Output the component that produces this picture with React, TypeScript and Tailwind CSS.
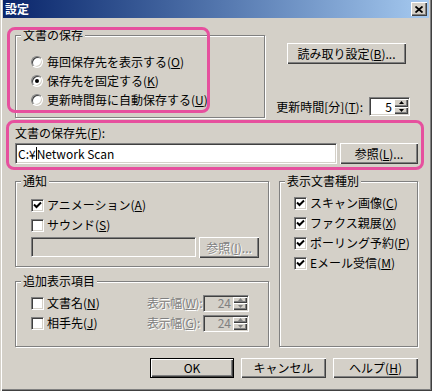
import type { ReactNode } from 'react'

const raised =
  'bg-[#d4d0c8] shadow-[inset_1px_1px_0_#fff,inset_-1px_-1px_0_#404040,inset_-2px_-2px_0_#808080]'
const sunken =
  'border border-t-[#808080] border-l-[#808080] border-r-white border-b-white shadow-[inset_1px_1px_0_#404040,inset_-1px_-1px_0_#d4d0c8]'
const grayText = 'text-[#808080] [text-shadow:1px_1px_0_#fff]'

function Mn({ text, k, tail = '' }: { text: string; k: string; tail?: string }) {
  return (
    <>
      {text}(<u className="underline-offset-1">{k}</u>){tail}
    </>
  )
}

function Btn({
  className = '',
  children,
  def,
  disabled,
}: {
  className?: string
  children: ReactNode
  def?: boolean
  disabled?: boolean
}) {
  return (
    <div
      className={`flex shrink-0 items-center justify-center whitespace-nowrap ${raised} ${
        def ? 'border border-black' : ''
      } ${disabled ? grayText : ''} ${className}`}
    >
      {children}
    </div>
  )
}

function Group({
  title,
  className = '',
  children,
}: {
  title: string
  className?: string
  children?: ReactNode
}) {
  return (
    <div
      className={`relative shrink-0 border border-[#808080] shadow-[inset_1px_1px_0_#fff,1px_1px_0_#fff] ${className}`}
    >
      <span className="absolute -top-[8px] left-[5px] bg-[#d4d0c8] px-[2px] leading-[14px]">
        {title}
      </span>
      {children}
    </div>
  )
}

function Radio({ checked, children }: { checked?: boolean; children: ReactNode }) {
  return (
    <div className="flex h-[19px] items-center gap-[4px] whitespace-nowrap">
      <span
        className={`flex h-[12px] w-[12px] items-center justify-center rounded-full bg-white ${sunken}`}
      >
        {checked && <span className="h-[4px] w-[4px] rounded-full bg-black" />}
      </span>
      <span>{children}</span>
    </div>
  )
}

function Check({
  checked,
  children,
  className = '',
}: {
  checked?: boolean
  children: ReactNode
  className?: string
}) {
  return (
    <div className={`flex h-[20px] items-center gap-[3px] whitespace-nowrap ${className}`}>
      <span className={`flex h-[13px] w-[13px] shrink-0 items-center justify-center bg-white ${sunken}`}>
        {checked && (
          <svg width="9" height="9" viewBox="0 0 9 9">
            <path d="M1 3.5 L3.5 6 L8 1.5" stroke="#000" strokeWidth="2" fill="none" />
          </svg>
        )}
      </span>
      <span>{children}</span>
    </div>
  )
}

function Arrow({ up, gray }: { up?: boolean; gray?: boolean }) {
  return (
    <svg width="5" height="3" viewBox="0 0 5 3">
      <polygon points={up ? '0,3 5,3 2.5,0' : '0,0 5,0 2.5,3'} fill={gray ? '#808080' : '#000'} />
    </svg>
  )
}

function Spin({
  value,
  disabled,
  className = '',
}: {
  value: string
  disabled?: boolean
  className?: string
}) {
  return (
    <div
      className={`flex shrink-0 items-stretch ${sunken} ${disabled ? 'bg-[#d4d0c8]' : 'bg-white'} ${className}`}
    >
      <span
        className={`flex flex-1 items-center justify-end pr-[2px] ${disabled ? 'text-[#808080]' : ''}`}
      >
        {value}
      </span>
      <div className="flex w-[15px] flex-col p-[1px] pl-0">
        <div className={`flex flex-1 items-center justify-center ${raised}`}>
          <Arrow up gray={disabled} />
        </div>
        <div className={`flex flex-1 items-center justify-center ${raised}`}>
          <Arrow gray={disabled} />
        </div>
      </div>
    </div>
  )
}

export default function App() {
  return (
    <div className="relative h-[391px] w-[432px] overflow-hidden bg-[#d4d0c8] font-['Noto_Sans_CJK_JP',sans-serif] text-[12px] leading-[14px] text-black shadow-[inset_1px_0_0_#d4d0c8,inset_2px_0_0_#fff,inset_-1px_-1px_0_#404040,inset_-2px_-2px_0_#808080]">
      {/* タイトルバー */}
      <div className="mx-[3px] flex h-[18px] items-center justify-between bg-linear-to-r from-[#0a246a] to-[#a6caf0] pl-[2px] pr-[2px]">
        <span className="font-bold text-white">設定</span>
        <div className={`flex h-[14px] w-[16px] items-center justify-center ${raised}`}>
          <svg width="8" height="7" viewBox="0 0 8 7">
            <path d="M0.5 0.5 L7.5 6.5 M7.5 0.5 L0.5 6.5" stroke="#000" strokeWidth="1.8" />
          </svg>
        </div>
      </div>

      <div className="pl-[15px] pr-[14px]">
        {/* 文書の保存 */}
        <div className="mt-[17px] flex">
          <Group title="文書の保存" className="h-[83px] w-[250px] pl-[15px] pt-[16px]">
            <Radio>
              <Mn text="毎回保存先を表示する" k="O" />
            </Radio>
            <Radio checked>
              <Mn text="保存先を固定する" k="K" />
            </Radio>
            <Radio>
              <Mn text="更新時間毎に自動保存する" k="U" />
            </Radio>
          </Group>
          <div className="flex flex-1 flex-col">
            <Btn className="ml-[22px] mt-[8px] h-[21px] w-[119px]">
              <Mn text="読み取り設定" k="B" tail="..." />
            </Btn>
            <div className="mt-[33px] flex items-center justify-end gap-[6px] whitespace-nowrap pr-[8px]">
              <span>
                更新時間[分](<u className="underline-offset-1">T</u>):
              </span>
              <Spin value="5" className="h-[19px] w-[41px]" />
            </div>
          </div>
        </div>

        {/* 文書の保存先 */}
        <div className="mt-[8px] h-[14px]">
          <Mn text="文書の保存先" k="F" tail=":" />
        </div>
        <div className="mt-[3px] flex gap-[3px]">
          <div className={`flex h-[21px] w-[323px] items-center whitespace-nowrap bg-white px-[2px] ${sunken}`}>
            C:¥<span className="h-[13px] w-[1px] bg-black" />
            Network Scan
          </div>
          <Btn className="h-[21px] w-[78px]">
            <Mn text="参照" k="L" tail="..." />
          </Btn>
        </div>

        <div className="mt-[17px] flex gap-[10px]">
          <div className="flex w-[254px] flex-col">
            {/* 通知 */}
            <Group title="通知" className="h-[86px] pl-[15px] pt-[13px]">
              <Check checked>
                <Mn text="アニメーション" k="A" />
              </Check>
              <Check>
                <Mn text="サウンド" k="S" />
              </Check>
              <div className="mt-[2px] flex gap-[3px]">
                <div className={`h-[20px] w-[165px] bg-[#d4d0c8] ${sunken}`} />
                <Btn disabled className="h-[21px] w-[60px]">
                  <Mn text="参照" k="I" tail="..." />
                </Btn>
              </div>
            </Group>

            {/* 追加表示項目 */}
            <Group title="追加表示項目" className="mt-[14px] h-[66px] pl-[15px] pt-[11px]">
              <div className="flex h-[20px] items-center">
                <Check className="w-[116px]">
                  <Mn text="文書名" k="N" />
                </Check>
                <span className={`w-[56px] whitespace-nowrap tracking-[-0.4px] ${grayText}`}>
                  <Mn text="表示幅" k="W" tail=":" />
                </span>
                <Spin disabled value="24" className="h-[17px] w-[46px]" />
              </div>
              <div className="flex h-[20px] items-center">
                <Check className="w-[116px]">
                  <Mn text="相手先" k="J" />
                </Check>
                <span className={`w-[56px] whitespace-nowrap tracking-[-0.4px] ${grayText}`}>
                  <Mn text="表示幅" k="G" tail=":" />
                </span>
                <Spin disabled value="24" className="h-[17px] w-[46px]" />
              </div>
            </Group>
          </div>

          {/* 表示文書種別 */}
          <Group title="表示文書種別" className="h-[166px] w-[139px] pl-[14px] pt-[11px]">
            <Check checked>
              <Mn text="スキャン画像" k="C" />
            </Check>
            <Check checked>
              <Mn text="ファクス親展" k="X" />
            </Check>
            <Check checked>
              <Mn text="ポーリング予約" k="P" />
            </Check>
            <Check checked>
              <Mn text="Eメール受信" k="M" />
            </Check>
          </Group>
        </div>

        <div className="mt-[11px] flex justify-end gap-[7px]">
          <Btn def className="h-[20px] w-[84px]">
            OK
          </Btn>
          <Btn className="h-[20px] w-[85px]">キャンセル</Btn>
          <Btn className="h-[20px] w-[85px]">
            <Mn text="ヘルプ" k="H" />
          </Btn>
        </div>
      </div>

      {/* 強調枠 */}
      <div className="absolute left-[7px] top-[27px] h-[86px] w-[203px] rounded-[8px] border-[3px] border-[#e6509e]" />
      <div className="absolute left-[6px] top-[120px] h-[50px] w-[418px] rounded-[8px] border-[3px] border-[#e6509e]" />
    </div>
  )
}
